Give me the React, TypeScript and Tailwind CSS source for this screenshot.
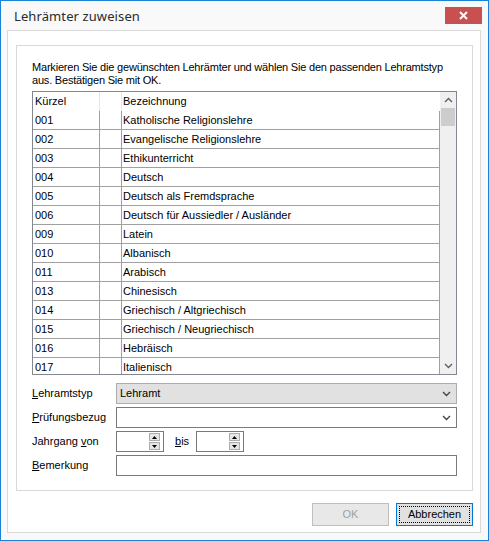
import React from "react";

const rows = [
  ["001", "Katholische Religionslehre"],
  ["002", "Evangelische Religionslehre"],
  ["003", "Ethikunterricht"],
  ["004", "Deutsch"],
  ["005", "Deutsch als Fremdsprache"],
  ["006", "Deutsch für Aussiedler / Ausländer"],
  ["009", "Latein"],
  ["010", "Albanisch"],
  ["011", "Arabisch"],
  ["013", "Chinesisch"],
  ["014", "Griechisch / Altgriechisch"],
  ["015", "Griechisch / Neugriechisch"],
  ["016", "Hebräisch"],
  ["017", "Italienisch"],
];

function Chevron({ up = false, className = "" }: { up?: boolean; className?: string }) {
  return (
    <svg width="9" height="6" viewBox="0 0 9 6" className={className}>
      <path
        d={up ? "M1 5 L4.5 1.5 L8 5" : "M1 1 L4.5 4.5 L8 1"}
        fill="none"
        stroke="currentColor"
        strokeWidth="1.4"
      />
    </svg>
  );
}

function Spinner() {
  return (
    <div className="w-[48px] h-[21px] border border-[#7a7a7a] bg-white flex justify-end items-center pr-[3px]">
      <div className="flex flex-col gap-[1px]">
        <div className="w-[11px] h-[8px] bg-[#e6e6e6] border border-[#acacac] flex items-center justify-center">
          <svg width="5" height="3" viewBox="0 0 5 3">
            <path d="M0 3 L2.5 0 L5 3 Z" fill="#000" />
          </svg>
        </div>
        <div className="w-[11px] h-[8px] bg-[#e6e6e6] border border-[#acacac] flex items-center justify-center">
          <svg width="5" height="3" viewBox="0 0 5 3">
            <path d="M0 0 L2.5 3 L5 0 Z" fill="#000" />
          </svg>
        </div>
      </div>
    </div>
  );
}

export default function App() {
  return (
    <div className="w-[489px] h-[541px] border border-[#1883d7] bg-[#f9f9f9] flex flex-col font-['Liberation_Sans',Arial,sans-serif] text-[11px] text-black">
      {/* title bar */}
      <div className="h-[29px] flex items-start shrink-0">
        <div className="pl-[13px] pt-[6px] text-[13px] tracking-[0.1px] text-[#2b2b2b] font-['Noto_Sans',sans-serif]">
          Lehrämter zuweisen
        </div>
        <div className="ml-auto mr-[6px] mt-[6px] w-[37px] h-[17px] bg-[#c75050] flex items-center justify-center">
          <svg width="9" height="9" viewBox="0 0 9 9">
            <path d="M1 1 L8 8 M8 1 L1 8" stroke="#fff" strokeWidth="2" />
          </svg>
        </div>
      </div>

      {/* outer frame */}
      <div className="ml-[6px] mr-[7px] h-[503px] border border-[#d9d9d9] bg-white flex flex-col">
        <div className="ml-[8px] mr-[7px] mt-[14px] h-[446px] border border-[#d9d9d9] px-[15px] pt-[15px] flex flex-col">
          <p className="leading-[13px] tracking-[-0.2px] -mr-[6px]">
            Markieren Sie die gewünschten Lehrämter und wählen Sie den passenden Lehramtstyp aus. Bestätigen Sie mit OK.
          </p>

          {/* list */}
          <div className="mt-[4px] h-[284px] border border-[#828790] flex overflow-hidden">
            <div className="w-[407px] flex flex-col">
              <div className="h-[19px] flex shrink-0 leading-[19px]">
                <div className="w-[67px] border-r border-[#e5e5e5] pl-[2px]">Kürzel</div>
                <div className="w-[22px] border-r border-[#e5e5e5]" />
                <div className="flex-1 pl-[1px]">Bezeichnung</div>
              </div>
              {rows.map(([k, b]) => (
                <div key={k} className="h-[19px] shrink-0 flex border-b border-[#a0a0a0] leading-[18px]">
                  <div className="w-[67px] border-r border-[#a0a0a0] pl-[2px]">{k}</div>
                  <div className="w-[22px] border-r border-[#a0a0a0]" />
                  <div className="flex-1 border-r border-[#a0a0a0] pl-[1px]">{b}</div>
                </div>
              ))}
            </div>
            <div className="w-[16px] bg-[#f0f0f0] flex flex-col">
              <div className="h-[16px] flex items-center justify-center text-[#606060]">
                <Chevron up />
              </div>
              <div className="h-[18px] mx-[1px] bg-[#cdcdcd]" />
              <div className="flex-1" />
              <div className="h-[16px] flex items-center justify-center text-[#606060]">
                <Chevron />
              </div>
            </div>
          </div>

          {/* form */}
          <div className="mt-[8px] flex flex-col gap-[3px]">
            <div className="flex items-center h-[21px]">
              <div className="w-[84px]">
                <u>L</u>ehramtstyp
              </div>
              <div className="flex-1 h-[21px] border border-[#adadad] bg-[#e1e1e1] flex items-center pl-[3px] pr-[5px]">
                <span>Lehramt</span>
                <Chevron className="ml-auto text-[#444]" />
              </div>
            </div>
            <div className="flex items-center h-[21px]">
              <div className="w-[84px]">
                <u>P</u>rüfungsbezug
              </div>
              <div className="flex-1 h-[21px] border border-[#7a7a7a] bg-white flex items-center pr-[5px]">
                <Chevron className="ml-auto text-[#444]" />
              </div>
            </div>
            <div className="flex items-center h-[21px]">
              <div className="w-[84px]">
                Jahrgang <u>v</u>on
              </div>
              <Spinner />
              <div className="ml-[11px] w-[21px]">
                <u>b</u>is
              </div>
              <Spinner />
            </div>
            <div className="flex items-center h-[21px]">
              <div className="w-[84px]">
                <u>B</u>emerkung
              </div>
              <div className="flex-1 h-[21px] border border-[#7a7a7a] bg-white" />
            </div>
          </div>
        </div>

        {/* buttons */}
        <div className="mt-[12px] mr-[7px] flex justify-end gap-[7px]">
          <div className="w-[77px] h-[23px] border border-[#bfbfbf] bg-[#e8e8e8] text-[#a0a0a0] flex items-center justify-center">
            OK
          </div>
          <div className="w-[77px] h-[23px] border border-[#0078d7] bg-[#e1e1e1] p-[2px]">
            <div className="w-full h-full border border-dotted border-black flex items-center justify-center">
              Abbrechen
            </div>
          </div>
        </div>
      </div>
    </div>
  );
}
